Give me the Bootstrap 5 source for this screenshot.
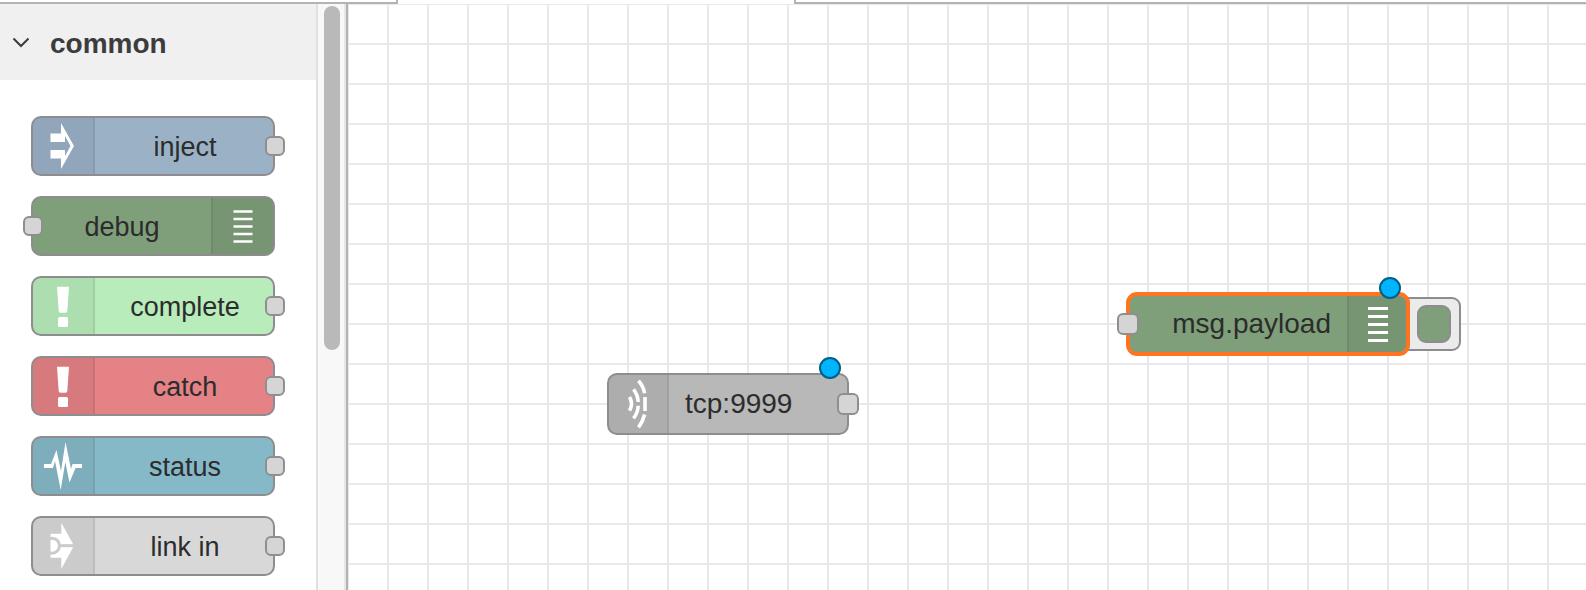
<!DOCTYPE html>
<html lang="en">
<head>
<meta charset="utf-8">
<meta name="viewport" content="width=device-width, initial-scale=1">
<title>Flow editor</title>
<link href="https://cdn.jsdelivr.net/npm/bootstrap@5.3.0/dist/css/bootstrap.min.css" rel="stylesheet">
<style>
  body { font-family: "Liberation Sans", Arial, sans-serif; color: #333; }
  .tab-strip { height: 4px; }
  .tab-rule { border-bottom: 2px solid #b3b3b3; }
  .tab-left { width: 398px; border-right: 2px solid #b3b3b3; border-bottom-right-radius: 1px; }
  .tab-open { width: 396px; }
  .tab-right { border-left: 2px solid #b3b3b3; }
  .workspace { min-height: 0; }
  .palette { width: 348px; border-right: 2px solid #b3b3b3; }
  .palette-list { min-width: 0; }
  .category { height: 76px; background: #f0f0f0; font-size: 28px; line-height: 32px; color: #3c3c3c; gap: 20px; padding: 2px 12px 0; }
  .category span { padding-top: 2px; }
  .palette-nodes { gap: 20px; padding: 36px 41px 20px 31px; }
  .scroll-track { width: 30px; background: #f8f8f8; border-left: 2px solid #e0e0e0; border-right: 2px solid #e6e6e6; padding: 2px 4px 0 6px; }
  .scroll-thumb { height: 344px; width: 16px; background: #b9b9b9; }

  .flow-node { height: 60px; border: 2px solid #8f8c8f; border-radius: 10px; font-size: 27px; line-height: 32px; color: #2c2c2c; }
  .palette-nodes .node-label { padding-top: 2px; }
  .palette-nodes .node-icon + .node-label { padding-left: 2px; }
  .node-icon { width: 62px; flex: none; background: rgba(0,0,0,.06); border-right: 2px solid rgba(0,0,0,.07); border-radius: 8px 0 0 8px; }
  .node-icon.at-end { border-right: 0; border-left: 2px solid rgba(0,0,0,.07); border-radius: 0 8px 8px 0; }
  .node-icon svg { display: block; }
  .node-port { width: 20px; height: 20px; border: 2px solid #8f8f8f; border-radius: 6px; background: #d5d5d5; top: 50%; margin-top: -10px; }
  .port-out { right: -12px; }
  .port-in { left: -10px; }

  .c-inject { background: #9bb1c6; }
  .c-debug { background: #7f9f7a; }
  .c-complete { background: #b8ecbb; }
  .c-catch { background: #e48285; }
  .c-status { background: #86b9c8; }
  .c-link { background: #d8d8d8; }
  .c-tcp { background: #b8b8b8; }

  .canvas { background:
      linear-gradient(#e9e9e9, #e9e9e9) 0 0 / 100% 1px no-repeat,
      linear-gradient(90deg, #e9e9e9 2px, transparent 2px) 39px 0 / 40px 40px,
      linear-gradient(#e9e9e9 2px, transparent 2px) 0 39px / 40px 40px,
      #fff; }
  .on-canvas { height: 62px; font-size: 28px; }
  .on-canvas .node-port { width: 22px; height: 22px; margin-top: -11px; }
  .on-canvas .node-icon { width: 60px; }
  .tcp-node { left: 259px; top: 369px; width: 242px; }
  .debug-wrap { left: 778px; top: 288px; width: 335px; height: 64px; }
  .picked { width: 284px; height: 64px; border: 4px solid #ff7420; border-radius: 11px; }
  .picked .port-in { left: -13px; }
  .picked .node-icon { width: 59px; }
  .changed-dot { width: 22px; height: 22px; border: 2px solid #005f87; background: #00b4ff; top: -18px; }
  .tcp-node .changed-dot { right: 6px; }
  .picked .changed-dot { right: 5px; top: -19px; }
  .debug-toggle { right: 0; top: 5px; width: 76px; height: 54px; border: 2px solid #8f8c8f; border-radius: 9px; background: #ebebeb; padding: 0 8px 0 0; }
  .toggle-face { width: 34px; height: 38px; border: 2px solid #8f8c8f; border-radius: 9px; }
</style>
</head>
<body class="vh-100 d-flex flex-column overflow-hidden">

<div class="tab-strip d-flex flex-shrink-0">
  <div class="tab-left tab-rule"></div>
  <div class="tab-open"></div>
  <div class="tab-right tab-rule flex-grow-1"></div>
</div>

<div class="workspace d-flex flex-grow-1">
  <aside class="palette d-flex flex-shrink-0 overflow-hidden">
    <div class="palette-list flex-grow-1">
      <button type="button" class="category d-flex align-items-center w-100 border-0 fw-bold text-start" aria-expanded="true">
        <svg width="18" height="12" viewBox="0 0 18 12" fill="none" stroke="#3c3c3c" stroke-width="2" aria-hidden="true"><path d="M1.500 1.500L9 9L16.500 1.500"/></svg>
        <span>common</span>
      </button>
      <div class="palette-nodes d-flex flex-column">
        <div class="flow-node c-inject position-relative d-flex">
          <div class="node-icon"><svg width="60" height="56" fill="#fff"><path d="M17.500 15.500H28V5L41 28L28 51V40.500H17.500V32H32V38L37.500 28L32 18V24H17.500Z"/></svg></div>
          <div class="node-label flex-grow-1 text-center align-self-center">inject</div>
          <span class="node-port port-out position-absolute"></span>
        </div>
        <div class="flow-node c-debug position-relative d-flex">
          <div class="node-label flex-grow-1 text-center align-self-center">debug</div>
          <div class="node-icon at-end"><svg width="60" height="56" stroke="#fff" stroke-width="2.700"><path d="M20.500 13.500H39.500M20.500 21H39.500M20.500 28.500H39.500M20.500 36H39.500M20.500 43.500H39.500"/></svg></div>
          <span class="node-port port-in position-absolute"></span>
        </div>
        <div class="flow-node c-complete position-relative d-flex">
          <div class="node-icon"><svg width="60" height="56" fill="#fff"><path d="M24 8.700H36L34.300 33Q34.200 34.700 32.500 34.700H27.500Q25.800 34.700 25.700 33Z"/><rect x="25" y="39" width="10" height="10" rx="1.500"/></svg></div>
          <div class="node-label flex-grow-1 text-center align-self-center">complete</div>
          <span class="node-port port-out position-absolute"></span>
        </div>
        <div class="flow-node c-catch position-relative d-flex">
          <div class="node-icon"><svg width="60" height="56" fill="#fff"><path d="M24 8.700H36L34.300 33Q34.200 34.700 32.500 34.700H27.500Q25.800 34.700 25.700 33Z"/><rect x="25" y="39" width="10" height="10" rx="1.500"/></svg></div>
          <div class="node-label flex-grow-1 text-center align-self-center">catch</div>
          <span class="node-port port-out position-absolute"></span>
        </div>
        <div class="flow-node c-status position-relative d-flex">
          <div class="node-icon"><svg width="60" height="56" fill="#fff"><path d="M11 26H18L23.500 12L28 33L32.500 4L38 31L39.500 26H49V30H42.500L36.500 44.500L32.300 24L27.700 52L22 23L20 30H11Z"/></svg></div>
          <div class="node-label flex-grow-1 text-center align-self-center">status</div>
          <span class="node-port port-out position-absolute"></span>
        </div>
        <div class="flow-node c-link position-relative d-flex">
          <div class="node-icon"><svg width="60" height="56"><path fill="#fff" d="M17.500 15.700H28.300V4.700L41 27.700L28.300 51V39.700H17.500Z"/><g fill="none" stroke="#cbcbcb" stroke-width="3"><circle cx="19" cy="27.700" r="7.500"/><path d="M27 27.700H42"/></g></svg></div>
          <div class="node-label flex-grow-1 text-center align-self-center">link in</div>
          <span class="node-port port-out position-absolute"></span>
        </div>
      </div>
    </div>
    <div class="scroll-track flex-shrink-0"><div class="scroll-thumb rounded-pill"></div></div>
  </aside>

  <main class="canvas position-relative flex-grow-1 overflow-hidden">
    <div class="flow-node on-canvas tcp-node c-tcp position-absolute d-flex">
      <div class="node-icon"><svg width="58" height="58" fill="none" stroke="#fff" stroke-width="3.600"><path d="M20.500 22Q24.500 28.800 20.500 35.600M24.500 14.300Q29 20 29.200 27M29.200 30.700Q29 37.500 24.500 43.400M29.500 5.700Q34.500 11.500 35.600 18.200M36 22V36M35.600 39.500Q34 46.500 29.500 52.300"/></svg></div>
      <div class="node-label align-self-center ps-3">tcp:9999</div>
      <span class="node-port port-out position-absolute"></span>
      <span class="changed-dot position-absolute rounded-circle"></span>
    </div>

    <div class="debug-wrap position-absolute">
      <button type="button" class="debug-toggle position-absolute d-flex align-items-center justify-content-end" aria-label="Toggle debug output"><span class="toggle-face c-debug"></span></button>
      <div class="flow-node on-canvas picked c-debug position-relative d-flex">
        <div class="node-label flex-grow-1 text-end align-self-center pe-3">msg.payload</div>
        <div class="node-icon at-end"><svg width="57" height="56" stroke="#fff" stroke-width="3"><path d="M19 12.500H39M19 20.500H39M19 28.500H39M19 36.500H39M19 44.500H39"/></svg></div>
        <span class="node-port port-in position-absolute"></span>
        <span class="changed-dot position-absolute rounded-circle"></span>
      </div>
    </div>
  </main>
</div>

<script src="https://cdn.jsdelivr.net/npm/bootstrap@5.3.0/dist/js/bootstrap.bundle.min.js"></script>
</body>
</html>
